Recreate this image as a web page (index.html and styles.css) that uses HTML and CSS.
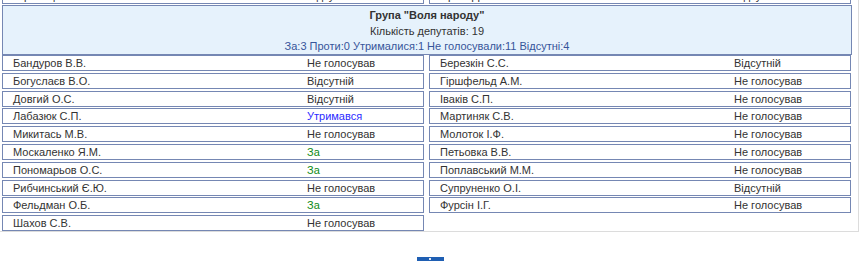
FILE: index.html
```html
<!DOCTYPE html>
<html lang="uk">
<head>
<meta charset="utf-8">
<title>Група "Воля народу"</title>
<link rel="stylesheet" href="styles.css">
</head>
<body>
<div class="page">
  <div class="panel">
    <div class="grid prev">
      <div class="dep"><span class="name">Юринець О.В.</span><span class="vote">Відсутній</span></div>
      <div class="dep"><span class="name">Ярош Д.А.</span><span class="vote">Відсутній</span></div>
    </div>
    <div class="group-head">
      <div class="title">Група "Воля народу"</div>
      <div class="count">Кількість депутатів: 19</div>
      <div class="summary">За:3 Проти:0 Утрималися:1 Не голосували:11 Відсутні:4</div>
    </div>
    <div class="grid">
      <div class="dep"><span class="name">Бандуров В.В.</span><span class="vote">Не голосував</span></div>
      <div class="dep"><span class="name">Березкін С.С.</span><span class="vote">Відсутній</span></div>
      <div class="dep"><span class="name">Богуслаєв В.О.</span><span class="vote">Відсутній</span></div>
      <div class="dep"><span class="name">Гіршфельд А.М.</span><span class="vote">Не голосував</span></div>
      <div class="dep"><span class="name">Довгий О.С.</span><span class="vote">Відсутній</span></div>
      <div class="dep"><span class="name">Іваків С.П.</span><span class="vote">Не голосував</span></div>
      <div class="dep"><span class="name">Лабазюк С.П.</span><span class="vote abst">Утримався</span></div>
      <div class="dep"><span class="name">Мартиняк С.В.</span><span class="vote">Не голосував</span></div>
      <div class="dep"><span class="name">Микитась М.В.</span><span class="vote">Не голосував</span></div>
      <div class="dep"><span class="name">Молоток І.Ф.</span><span class="vote">Не голосував</span></div>
      <div class="dep"><span class="name">Москаленко Я.М.</span><span class="vote yes">За</span></div>
      <div class="dep"><span class="name">Петьовка В.В.</span><span class="vote">Не голосував</span></div>
      <div class="dep"><span class="name">Пономарьов О.С.</span><span class="vote yes">За</span></div>
      <div class="dep"><span class="name">Поплавський М.М.</span><span class="vote">Не голосував</span></div>
      <div class="dep"><span class="name">Рибчинський Є.Ю.</span><span class="vote">Не голосував</span></div>
      <div class="dep"><span class="name">Супруненко О.І.</span><span class="vote">Відсутній</span></div>
      <div class="dep"><span class="name">Фельдман О.Б.</span><span class="vote yes">За</span></div>
      <div class="dep"><span class="name">Фурсін І.Г.</span><span class="vote">Не голосував</span></div>
      <div class="dep"><span class="name">Шахов С.В.</span><span class="vote">Не голосував</span></div>
    </div>
  </div>
  <div class="to-top"><span class="arrow"></span></div>
</div>
</body>
</html>
```

FILE: styles.css
```css
html, body {
  margin: 0;
  padding: 0;
  background: #fff;
}

body {
  font-family: "Liberation Sans", Arial, sans-serif;
  font-size: 11px;
  color: #333;
  overflow: hidden;
}

.page {
  width: 860px;
}

.panel {
  width: 859px;
  margin-top: -12px;
  border-right: 1px solid #dcdcdc;
  border-bottom: 1px solid #dcdcdc;
  padding-left: 2px;
  box-sizing: border-box;
  display: flex;
  flex-direction: column;
}

.grid {
  display: grid;
  grid-template-columns: 422px 422px;
  column-gap: 5px;
  row-gap: 1.8px;
}

.grid.prev {
  margin-bottom: 1px;
}

.dep {
  height: 16px;
  box-sizing: border-box;
  border: 1px solid #7587b3;
  display: flex;
  align-items: center;
  line-height: 14px;
  white-space: nowrap;
}

.name {
  width: 294px;
  padding-left: 10px;
  flex: none;
}

.vote {
  flex: 1;
}

.vote.yes {
  color: #0e8a16;
}

.vote.abst {
  color: #2b2bff;
}

.group-head {
  width: 850px;
  height: 50px;
  box-sizing: border-box;
  border: 1px solid #7587b3;
  background: #e6f2fc;
  text-align: center;
  padding-top: 2px;
  line-height: 15.5px;
  margin-bottom: 0;
}

.title {
  font-weight: bold;
}

.summary {
  color: #36559a;
}

.to-top {
  width: 27px;
  height: 20px;
  margin: 25px auto 0;
  background: #1f5fb3;
  display: flex;
  justify-content: center;
}

.arrow {
  width: 2px;
  height: 2px;
  margin-top: 1px;
  background: #dfe8f5;
}
```
